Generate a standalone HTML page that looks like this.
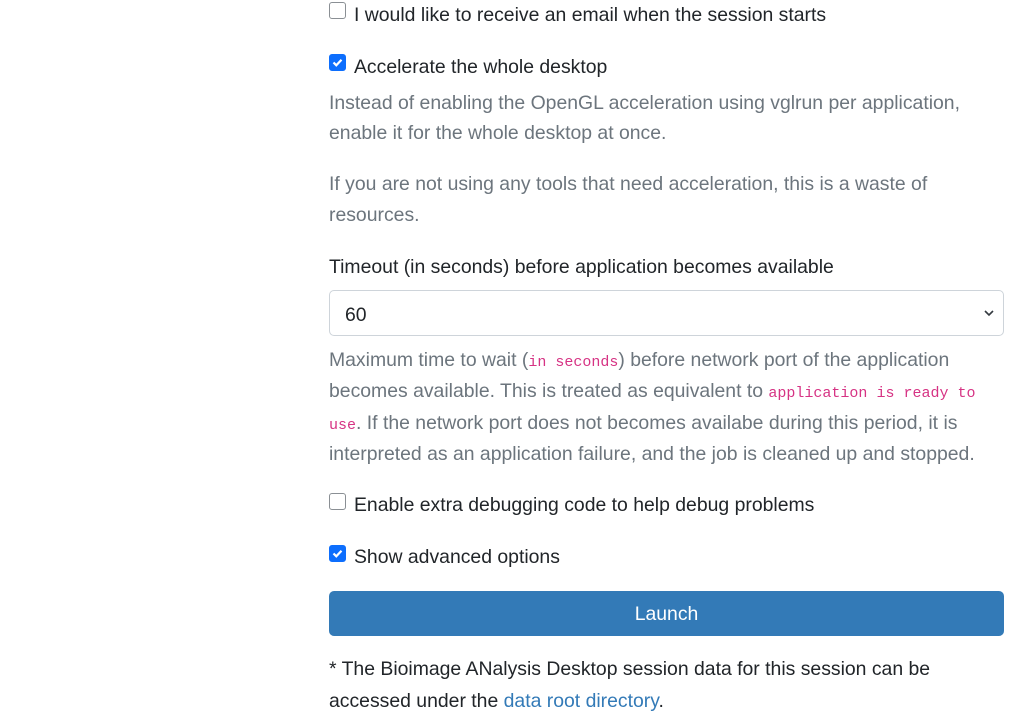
<!DOCTYPE html>
<html><head><meta charset="utf-8"><style>
html,body{margin:0;padding:0;background:#fff;width:1023px;height:716px;overflow:hidden}
body{font-family:"Liberation Sans",sans-serif;font-size:19.4px;color:#212529;position:relative}
.l{position:absolute;left:329px;white-space:nowrap;line-height:24px}
.m{color:#6c757d}
code{font-family:"Liberation Mono",monospace;color:#d63384;font-size:15px}
.cb{position:absolute;left:329px;width:17px;height:17px;border:1px solid #8a8f94;border-radius:3px;background:#fff;box-sizing:border-box}
.cb.on{background:#0d6efd;border-color:#0d6efd}
.cb.on svg{position:absolute;left:1px;top:1px}
.t{left:354px}
.sel{position:absolute;left:329px;top:290px;width:675px;height:46px;border:1px solid #ced4da;border-radius:5px;box-sizing:border-box}
.btn{position:absolute;left:329px;top:591px;width:675px;height:45px;background:#337ab7;border-radius:5px;color:#fff;text-align:center;line-height:47px}
a{color:#337ab7;text-decoration:none}
</style></head><body>
<div class="cb" style="top:2px"></div>
<div class="l t" style="top:3px">I would like to receive an email when the session starts</div>
<div class="cb on" style="top:54px"><svg width="13" height="13" viewBox="0 0 13 13"><path d="M2.5 6.5l2.8 2.8L10.5 3.8" stroke="#fff" stroke-width="2.2" fill="none"/></svg></div>
<div class="l t" style="top:55px">Accelerate the whole desktop</div>
<div class="l m" style="top:91px">Instead of enabling the OpenGL acceleration using vglrun per application,</div>
<div class="l m" style="top:121px">enable it for the whole desktop at once.</div>
<div class="l m" style="top:172px">If you are not using any tools that need acceleration, this is a waste of</div>
<div class="l m" style="top:203px">resources.</div>
<div class="l" style="top:255px">Timeout (in seconds) before application becomes available</div>
<div class="sel"><span style="position:absolute;left:15px;top:13px">60</span>
<svg style="position:absolute;right:8px;top:17px" width="12" height="10" viewBox="0 0 12 10"><path d="M2 3l4 4 4-4" stroke="#343a40" stroke-width="1.6" fill="none"/></svg></div>
<div class="l m" style="top:348px">Maximum time to wait (<code>in seconds</code>) before network port of the application</div>
<div class="l m" style="top:379px">becomes available. This is treated as equivalent to <code>application is ready to</code></div>
<div class="l m" style="top:411px"><code>use</code>. If the network port does not becomes availabe during this period, it is</div>
<div class="l m" style="top:442px">interpreted as an application failure, and the job is cleaned up and stopped.</div>
<div class="cb" style="top:493px"></div>
<div class="l t" style="top:493px">Enable extra debugging code to help debug problems</div>
<div class="cb on" style="top:545px"><svg width="13" height="13" viewBox="0 0 13 13"><path d="M2.5 6.5l2.8 2.8L10.5 3.8" stroke="#fff" stroke-width="2.2" fill="none"/></svg></div>
<div class="l t" style="top:545px">Show advanced options</div>
<div class="btn">Launch</div>
<div class="l" style="top:657px">* The Bioimage ANalysis Desktop session data for this session can be</div>
<div class="l" style="top:689px">accessed under the <a>data root directory</a>.</div>
</body></html>
